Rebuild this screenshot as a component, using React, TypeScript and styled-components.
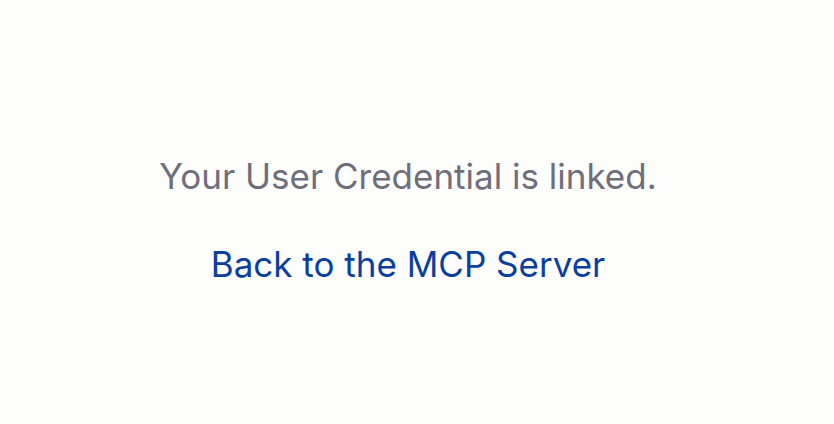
import React from 'react';
import styled, { createGlobalStyle } from 'styled-components';

const GlobalStyle = createGlobalStyle`
  html, body {
    margin: 0;
    padding: 0;
    background: #fdfdfc;
  }
  body {
    font-family: Inter, "Noto Sans", sans-serif;
  }
`;

const Page = styled.main`
  box-sizing: border-box;
  height: 424px;
  display: flex;
  flex-direction: column;
  align-items: center;
  justify-content: center;
  gap: 46px;
  padding: 16px 18px 0 0;
`;

const Message = styled.p`
  margin: 0;
  font-size: 35px;
  line-height: 42px;
  color: #6f6e7a;
`;

const BackLink = styled.a`
  font-size: 35px;
  line-height: 42px;
  color: #0a3fa0;
  text-decoration: none;
`;

const App: React.FC = () => {
  return (
    <>
      <GlobalStyle />
      <Page>
        <Message>Your User Credential is linked.</Message>
        <BackLink href="#">Back to the MCP Server</BackLink>
      </Page>
    </>
  );
};

export default App;
